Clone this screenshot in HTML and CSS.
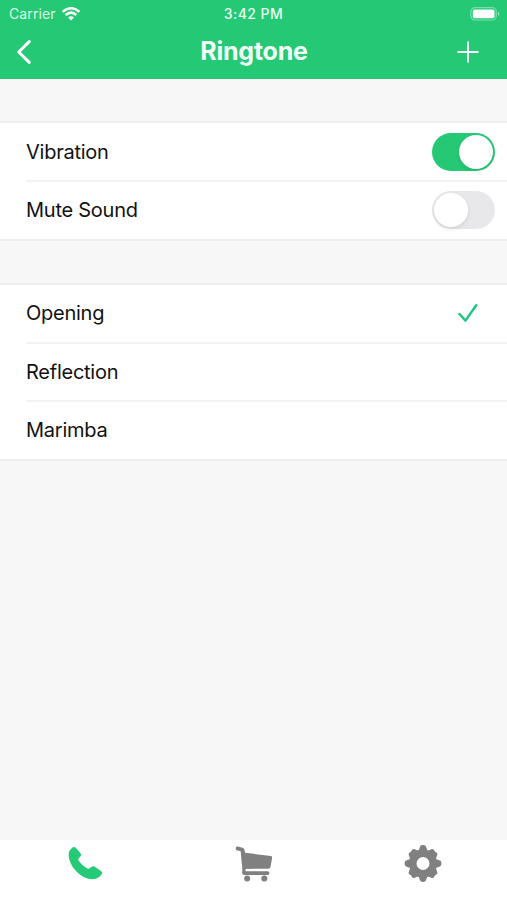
FILE: index.html
```html
<!DOCTYPE html>
<html lang="en">
<head>
<meta charset="utf-8">
<title>Ringtone</title>
<link rel="stylesheet" href="styles.css">
</head>
<body>
<header class="header">
  <div class="status">
    <div class="carrier"><span>Carrier</span>
      <svg class="wifi" width="18" height="14" viewBox="0 0 18 14"><g fill="none" stroke="#fff" stroke-width="2.5"><path d="M.6 4.9Q9-2.5 17.4 4.9"/><path d="M3.7 8Q9 3.3 14.3 8"/></g><path d="M6.1 10.4Q9 8 11.9 10.4L9 13.5Z" fill="#fff"/></svg>
    </div>
    <time class="time">3:42 PM</time>
    <svg class="battery" width="31" height="14" viewBox="0 0 31 14"><rect x=".9" y=".7" width="25.4" height="12.3" rx="4" fill="none" stroke="#fff" stroke-opacity=".4" stroke-width="1.2"/><rect x="2.8" y="2.6" width="21.7" height="8.6" rx="2" fill="#fff"/><path d="M28 4.8q2.6 2 0 4.2Z" fill="#fff" fill-opacity=".55"/></svg>
  </div>
  <div class="nav">
    <svg width="18" height="26" viewBox="0 0 18 26"><path d="M14.3 2.6 3.7 13l10.6 10.4" fill="none" stroke="#fff" stroke-width="3" stroke-linecap="round" stroke-linejoin="round"/></svg>
    <h1 class="title">Ringtone</h1>
    <svg class="add" width="22" height="22" viewBox="0 0 22 22"><path d="M11 .5v21M.5 11h21" stroke="#fff" stroke-width="1.9"/></svg>
  </div>
</header>
<main class="content">
  <section class="group">
    <div class="row"><span>Vibration</span><span class="switch on"><i class="knob"></i></span></div>
    <div class="row"><span>Mute Sound</span><span class="switch"><i class="knob"></i></span></div>
  </section>
  <section class="group">
    <div class="row"><span>Opening</span><svg class="check" width="20" height="20" viewBox="0 0 20 20"><path d="m1.5 11 6 6.6L18.2 2.2" fill="none" stroke="#20c785" stroke-width="2.5" stroke-linecap="round" stroke-linejoin="round"/></svg></div>
    <div class="row"><span>Reflection</span></div>
    <div class="row"><span>Marimba</span></div>
  </section>
</main>
<nav class="tabs">
  <div class="tab"><svg width="34" height="36" viewBox=".3 -.5 34 36"><path d="M4.3 2.6Q6.3.3 8.2 2.6l4.4 5q1.4 1.6.1 3.2l-2.5 3.2q3.7 6 10.4 9.6l3.5-2.3q1.7-1.1 3.3.2l5.8 4.1q2 1.5.5 3.5-3.4 4.8-9.3 4.7C12 33 .5 19.6 1 8.5 1.1 5.6 2.4 4.5 4.3 2.6Z" fill="#24ca75"/></svg></div>
  <div class="tab"><svg width="37" height="37" viewBox="-.8 -.9 38 37"><g fill="#808080"><path d="M2 .2 7 1.5q1.7.5 2 2.3l.5 2.8 26.4 3.2q1.8.2 1.5 2l-1.8 9.4q-.3 1.6-2 1.7L10 23.2v2.3h22.7a1.9 1.9 0 0 1 0 3.8H9q-2.5 0-2.5-2l.3-3.2L5 5.1 1 4Q-.4 3.4 0 1.6.5-.2 2 .2Z"/><circle cx="11.7" cy="33" r="3.1"/><circle cx="29.3" cy="33" r="3.1"/></g></svg></div>
  <div class="tab"><svg width="38" height="38" viewBox="-19 -18.5 38 38"><defs><path id="tooth" d="M-6-11.5Q-3.8-13-3.2-16.3-2.8-18.4-.6-18.4H.6Q2.8-18.4 3.2-16.3 3.8-13 6-11.5Z"/><path id="corner" d="M-6.8-11.5Q-4.8-13.5-4.2-15.8-3.8-17.6-2-17.3 0-16.5 2-17.3 3.8-17.6 4.2-15.8 4.8-13.5 6.8-11.5Z"/></defs><g fill="#808080"><use href="#tooth"/><use href="#corner" transform="rotate(45)"/><use href="#tooth" transform="rotate(90)"/><use href="#corner" transform="rotate(135)"/><use href="#tooth" transform="rotate(180)"/><use href="#corner" transform="rotate(225)"/><use href="#tooth" transform="rotate(270)"/><use href="#corner" transform="rotate(315)"/></g><circle r="9.8" fill="none" stroke="#808080" stroke-width="6.6"/></svg></div>
</nav>
</body>
</html>
```
FILE: styles.css
```css
* { box-sizing: border-box; }
body {
  margin: 0;
  height: 900px;
  display: flex;
  flex-direction: column;
  overflow: hidden;
  background: #f7f7f7;
  color: #111;
  font-family: Inter, "Liberation Sans", sans-serif;
}
svg { display: block; flex: none; }
.header { height: 79px; background: #25c975; color: #fff; }
.status {
  height: 27px;
  padding: 0 6px 0 9px;
  display: grid;
  grid-template-columns: 1fr auto 1fr;
  align-items: center;
  font-size: 14px;
  line-height: 27px;
}
.carrier { display: flex; align-items: center; gap: 6px; letter-spacing: .1px; color: #d9f7e7; }
.time { margin-right: 3px; font-weight: 500; font-size: 14px; letter-spacing: .45px; color: #e8fbf1; }
.battery { justify-self: end; }
.nav {
  height: 50px;
  padding: 0 28px 0 15px;
  display: grid;
  grid-template-columns: 1fr auto 1fr;
  align-items: center;
}
.title { margin: 0 -14px 1px 0; font-size: 25px; font-weight: 700; line-height: 47px; letter-spacing: -.25px; color: #f0fff7; }
.add { justify-self: end; }
.content { flex: 1; padding-top: 42px; }
.group {
  margin-bottom: 42px;
  padding-left: 26px;
  background: #fff;
  border-top: 2px solid #eee;
  border-bottom: 2px solid #eee;
}
.row {
  height: 58.5px;
  padding-right: 12px;
  display: flex;
  align-items: center;
  justify-content: space-between;
  font-size: 20px;
  line-height: 28px;
  letter-spacing: -.25px;
}
.group .row:first-child { height: 57px; }
.row:last-child { height: 58.5px; }
.row + .row { border-top: 2px solid #f2f2f2; }
.check { margin-right: 17px; }
.switch { width: 63px; height: 38px; padding: 2px; display: flex; border-radius: 19px; background: #e8e8eb; }
.switch.on { justify-content: flex-end; background: #25c975; }
.knob { width: 34px; height: 34px; border-radius: 50%; background: #fff; box-shadow: 0 2px 4px #00000018; }
.tabs { height: 60px; display: grid; grid-template-columns: repeat(3, 1fr); background: #fff; }
.tab { display: flex; justify-content: center; padding-top: 5px; }
```
